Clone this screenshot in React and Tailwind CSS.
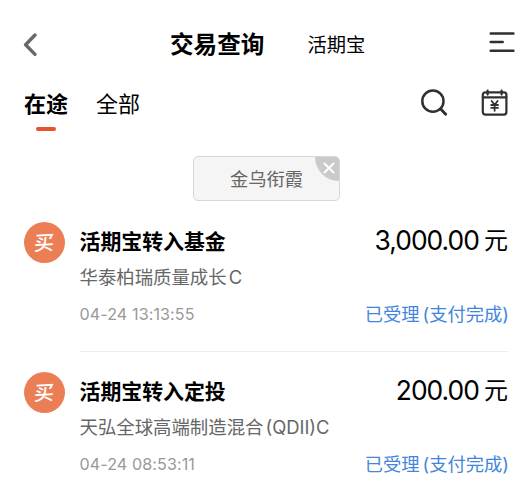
const orders = [
  { id: 1, title: '活期宝转入基金', fund: '华泰柏瑞质量成长', suffix: 'C', time: '04-24 13:13:55', amount: '3,000.00' },
  { id: 2, title: '活期宝转入定投', fund: '天弘全球高端制造混合', suffix: '(QDII)C', time: '04-24 08:53:11', amount: '200.00' },
];

function BackIcon() {
  return (
    <svg width="15" height="24" viewBox="0 0 15 24" fill="none" stroke="#686868" strokeWidth="3.4" strokeLinecap="round" strokeLinejoin="round">
      <path d="M13 2L3.6 11.7l9.4 9.7" />
    </svg>
  );
}

function MenuIcon() {
  return (
    <svg width="26" height="22" viewBox="0 0 26 22" fill="none" stroke="#2f2f2f" strokeWidth="2.5" strokeLinecap="round">
      <path d="M1.7 2.5h22.7M1.7 11h12M1.7 19.7h22.7" />
    </svg>
  );
}

function SearchIcon() {
  return (
    <svg width="28" height="28" viewBox="0 0 28 28" fill="none" stroke="#303030" strokeWidth="2.5" strokeLinecap="round">
      <circle cx="12.9" cy="12.2" r="10.6" />
      <path d="M20.7 20l5 5.2" strokeWidth="2.9" />
    </svg>
  );
}

function CalendarIcon() {
  return (
    <svg width="28" height="28" viewBox="0 0 28 28" fill="none" stroke="#303030" strokeWidth="2.2" strokeLinecap="round" strokeLinejoin="round">
      <rect x="1.8" y="3.4" width="23.6" height="22.2" rx="2.5" />
      <path d="M1.8 8.3h23.6M6.6 1.6v4M20.6 1.6v4" />
      <path d="M10.6 12l3 3.8 3-3.8M13.6 15.8v6M10.2 16h6.8M10.2 18.9h6.8" strokeWidth="1.8" />
    </svg>
  );
}

function OrderItem({ order }) {
  return (
    <li className="flex h-[150px] pr-6 pl-[23.5px]">
      <div className="mt-[20.4px] mr-[15px] flex h-[41px] w-[41px] shrink-0 items-center justify-center rounded-full bg-[#ec7e55]">
        <span className="-rotate-3 -skew-x-6 text-[20px] leading-none font-medium text-white">买</span>
      </div>
      <div className="flex min-w-0 flex-1 flex-col border-b border-[#ececec]">
        <div className="mt-[23px] flex h-8 items-center justify-between">
          <h2 className="pt-px text-[20.9px] font-bold text-black">{order.title}</h2>
          <p className="flex items-center text-[26.4px] text-black">
            <span className="tracking-[-0.95px]">{order.amount}</span>
            <span className="ml-[5px] text-[24px]">元</span>
          </p>
        </div>
        <p className="mt-[11px] flex h-5 items-center text-[18.4px] text-[#666]">
          <span>{order.fund}</span>
          <span className="ml-0.5">{order.suffix}</span>
        </p>
        <div className="mt-4 flex h-5 items-center justify-between">
          <time className="text-[16.1px] tracking-[0.1px] text-[#999]">{order.time}</time>
          <span className="mr-[-1px] flex pt-px text-[18.3px] text-[#4385dc]">
            <span>已受理</span>
            <span className="ml-[3px]">(支付完成)</span>
          </span>
        </div>
      </div>
    </li>
  );
}

export default function App() {
  return (
    <div className="h-[500px] w-[532px] overflow-hidden bg-white font-['Inter','Noto_Sans_CJK_SC',sans-serif] whitespace-nowrap">
      <header className="flex h-[89px] items-center pr-[17px] pl-[22px]">
        <BackIcon />
        <h1 className="ml-[133px] text-[23.6px] font-bold text-black">交易查询</h1>
        <span className="ml-[43px] pt-0.5 text-[19.3px] text-black">活期宝</span>
        <div className="mt-[-5px] ml-auto"><MenuIcon /></div>
      </header>

      <nav className="flex h-[67px] pr-[23px] pl-6">
        <div className="flex flex-col items-center">
          <span className="flex h-[30px] items-center pt-px text-[22px] font-bold text-black">在途</span>
          <span className="mt-2 h-1 w-5 rounded-full bg-[#e8532b]" />
        </div>
        <span className="ml-7 flex h-[30px] items-center pt-px text-[22px] text-black">全部</span>
        <div className="ml-auto flex h-[28px] gap-[33px]">
          <SearchIcon />
          <CalendarIcon />
        </div>
      </nav>

      <div className="relative ml-[193px] flex h-[45px] w-[147px] items-center justify-center overflow-hidden rounded-[5px] border border-[#d6d6d6] bg-[#f5f5f5]">
        <span className="pt-0.5 text-[18.3px] text-[#666]">金乌衔霞</span>
        <span className="absolute top-0 right-0 flex h-6 w-6 items-center justify-center rounded-bl-full bg-[#cacaca]">
          <svg className="mb-0.5 ml-1" width="12" height="12" viewBox="0 0 12 12" stroke="#fff" strokeWidth="2" strokeLinecap="round">
            <path d="M1.5 1.5l9 9M10.5 1.5l-9 9" />
          </svg>
        </span>
      </div>

      <ul className="pt-px">
        {orders.map((order) => (
          <OrderItem key={order.id} order={order} />
        ))}
      </ul>
    </div>
  );
}
